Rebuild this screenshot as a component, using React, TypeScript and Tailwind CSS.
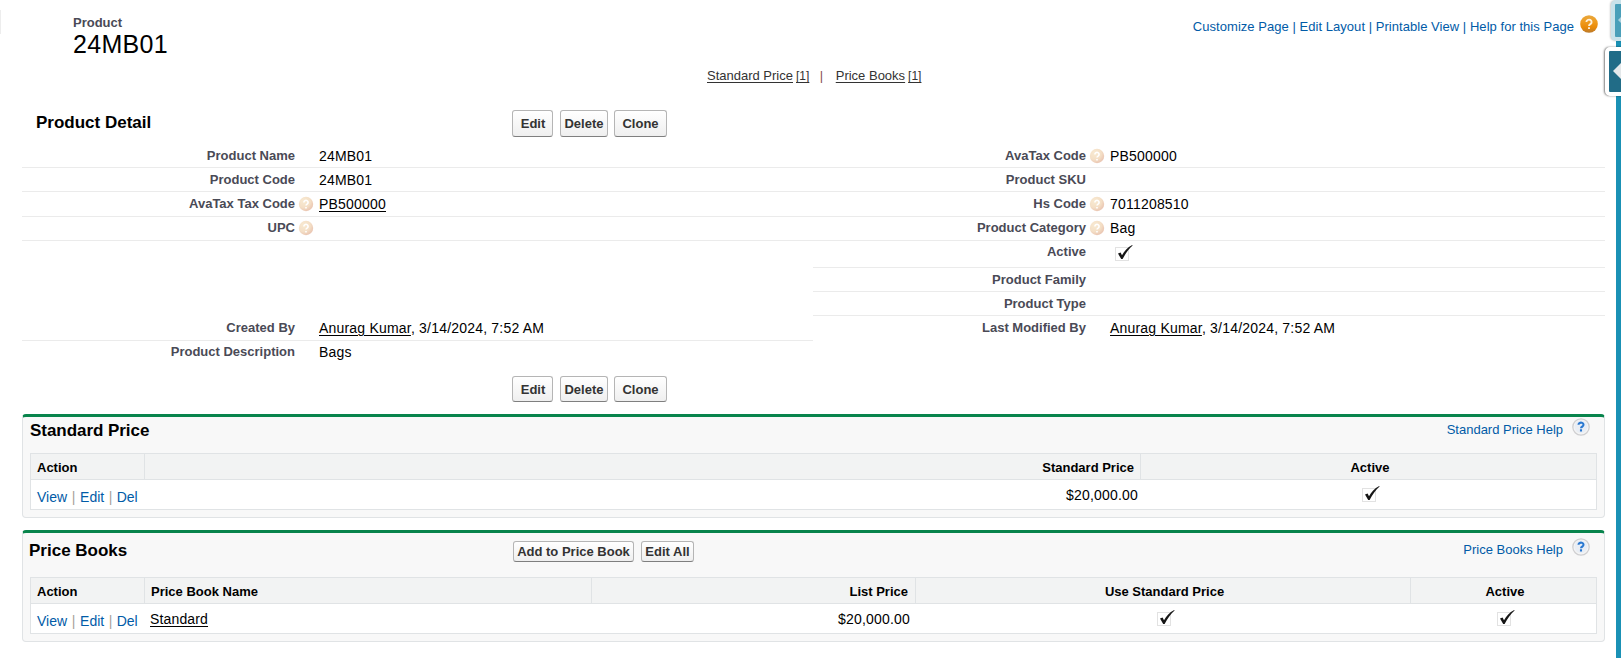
import type { ReactNode } from "react";

function HelpDot() {
  return (
    <svg viewBox="0 0 16 16" className="h-4 w-4">
      <defs>
        <radialGradient id="dot" cx="35%" cy="30%" r="75%">
          <stop offset="0" stopColor="#f8ead2" />
          <stop offset="0.6" stopColor="#f4dfc6" />
          <stop offset="1" stopColor="#e9c3b0" />
        </radialGradient>
      </defs>
      <circle cx="8" cy="8" r="7.2" fill="url(#dot)" />
      <path d="M5.9 6.4a2.1 2 0 1 1 3.2 1.7c-.8.5-1.1.8-1.1 1.5M8 10.9v1.5" fill="none" stroke="#fff" strokeWidth="1.6" />
    </svg>
  );
}

function PageHelpIcon() {
  return (
    <svg viewBox="0 0 18 18" className="h-[18px] w-[18px]">
      <defs>
        <linearGradient id="orange" x1="0" y1="0" x2="0" y2="1">
          <stop offset="0" stopColor="#e8a840" />
          <stop offset="0.4" stopColor="#ef9a1c" />
          <stop offset="0.7" stopColor="#e98a08" />
          <stop offset="1" stopColor="#b87a30" />
        </linearGradient>
      </defs>
      <circle cx="9" cy="9" r="8.8" fill="url(#orange)" />
      <path d="M6.4 7.1a2.6 2.4 0 1 1 4 2c-.9.6-1.4.9-1.4 1.8M9 12.2v1.9" fill="none" stroke="#fdf0dc" strokeWidth="1.9" />
    </svg>
  );
}

function ListHelpIcon() {
  return (
    <svg viewBox="0 0 18 18" className="h-[18px] w-[18px]">
      <circle cx="9" cy="9" r="8.2" fill="#f4f4f4" stroke="#cfcfd1" strokeWidth="1.3" />
      <circle cx="9" cy="8.6" r="6.4" fill="#e9eef5" />
      <path d="M6.5 6.7a2.5 2.1 0 1 1 3.9 1.8c-.9.5-1.4.8-1.4 1.7M9 11.3v2.1" fill="none" stroke="#2a78d0" strokeWidth="2.1" />
    </svg>
  );
}

function Check() {
  return (
    <svg viewBox="0 0 20 18" className="h-[18px] w-5">
      <rect x="1.5" y="3.5" width="13" height="13" fill="none" stroke="#c4c4c4" strokeDasharray="1 1" />
      <path d="M4 9.6 6.6 8.6 8 11.2C10.4 7 13.4 3.4 18.2 1L18.6 1.6C14.6 5 11.6 9.4 8.6 15H7.2Z" fill="#161616" />
    </svg>
  );
}

function Btn({ children, className }: { children: ReactNode; className: string }) {
  return (
    <button
      className={
        "shrink-0 rounded-[3px] border border-[#b5b5b5] border-b-[#7f7f7f] bg-linear-to-b from-white to-[#efefef] text-center text-[13px] font-bold whitespace-nowrap text-[#333] " +
        className
      }
    >
      {children}
    </button>
  );
}

function ActionButtons({ className }: { className: string }) {
  return (
    <div className="flex">
      <Btn className={"w-[41px] pl-px " + className}>Edit</Btn>
      <Btn className={"ml-[7px] w-12 " + className}>Delete</Btn>
      <Btn className={"ml-1.5 w-[53px] " + className}>Clone</Btn>
    </div>
  );
}

function Field({
  label,
  help,
  children,
  className = "h-6 border-b pt-1",
}: {
  label: string;
  help?: boolean;
  children?: ReactNode;
  className?: string;
}) {
  return (
    <div className={"flex border-[#ebebeb] " + className}>
      <div className="w-[273px] shrink-0 text-right text-[13px] leading-4 font-bold text-[#4a4a56]">{label}</div>
      <div className="w-6 shrink-0 pl-[2.5px]">{help && <HelpDot />}</div>
      <div className="text-[14px] leading-4 tracking-[0.2px] text-black">{children}</div>
    </div>
  );
}

function UserStamp() {
  return (
    <>
      <a className="underline underline-offset-2">Anurag Kumar</a>, 3/14/2024, 7:52 AM
    </>
  );
}

function RowActions() {
  return (
    <div className="flex pl-1.5 text-[14px] leading-4 text-[#015ba7]">
      <a>View</a>
      <span className="w-[13px] text-center text-[#a8a098]">|</span>
      <a>Edit</a>
      <span className="w-[12.5px] text-center text-[#a8a098]">|</span>
      <a>Del</a>
    </div>
  );
}

function Card({ children, className }: { children: ReactNode; className: string }) {
  return (
    <section className={"rounded-[4px] border border-t-[3px] border-[#e0e3e5] border-t-[#08844c] bg-[#f8f8f8] px-[7px] " + className}>
      {children}
    </section>
  );
}

const headCell = "border-r border-[#e0e3e5] px-1.5 pt-[6px]";

export default function App() {
  return (
    <div className="relative flex h-[658px] w-[1621px] overflow-hidden bg-white font-['Liberation_Sans',Arial,sans-serif]">
      <main className="w-[1616px] shrink-0 pl-[22px]">
        <header className="flex h-[66px] justify-between">
          <div className="pt-[15px] pl-[51px]">
            <div className="text-[13px] leading-4 font-bold text-[#4a4a56]">Product</div>
            <h1 className="text-[25px] leading-[26px] tracking-[0.3px] text-black">24MB01</h1>
          </div>
          <div className="flex pt-[15px] pr-[18px]">
            <div className="mr-1.5 pt-1 text-[13px] leading-4 tracking-[0.04px] whitespace-nowrap text-[#015ba7]">
              <a>Customize Page</a> | <a>Edit Layout</a> | <a>Printable View</a> | <a>Help for this Page</a>
            </div>
            <PageHelpIcon />
          </div>
        </header>

        <nav className="flex h-11 items-baseline pt-px pl-[685px] text-[13px] leading-[18px] text-[#333]">
          <a className="underline underline-offset-2">Standard Price</a>
          <a className="ml-[3px] text-[12px] underline underline-offset-2">[1]</a>
          <span className="mr-[12.5px] ml-[10.5px] text-[#8a5050]">|</span>
          <a className="underline underline-offset-2">Price Books</a>
          <a className="ml-[3px] text-[12px] underline underline-offset-2">[1]</a>
        </nav>

        <section>
          <div className="flex h-[34px]">
            <h2 className="w-[490px] shrink-0 pt-[3px] pl-[14px] text-[17px] leading-5 font-bold text-black">Product Detail</h2>
            <ActionButtons className="h-[27px]" />
          </div>
          <div className="flex h-[232px] w-[1583px]">
            <div className="w-[791px]">
              <Field label="Product Name">24MB01</Field>
              <Field label="Product Code">24MB01</Field>
              <Field label="AvaTax Tax Code" help className="h-[25px] border-b pt-1">
                <a className="underline underline-offset-2">PB500000</a>
              </Field>
              <Field label="UPC" help className="h-6 border-b pt-[3px]" />
              <div className="h-[75px]" />
              <Field label="Created By" className="h-[25px] border-b pt-1">
                <UserStamp />
              </Field>
              <Field label="Product Description" className="h-6 pt-[3px]">
                Bags
              </Field>
            </div>
            <div className="w-[792px]">
              <Field label="AvaTax Code" help>PB500000</Field>
              <Field label="Product SKU" />
              <Field label="Hs Code" help className="h-[25px] border-b pt-1">7011208510</Field>
              <Field label="Product Category" help className="h-6 border-b pt-[3px]">Bag</Field>
              <Field label="Active" className="h-[27px] border-b pt-[3px]">
                <div className="pl-1">
                  <Check />
                </div>
              </Field>
              <Field label="Product Family" />
              <Field label="Product Type" />
              <Field label="Last Modified By" className="h-[25px] pt-1">
                <UserStamp />
              </Field>
            </div>
          </div>
          <div className="h-[38px] pl-[490px]">
            <ActionButtons className="h-[26px] pt-px" />
          </div>
        </section>

        <div className="w-[1583px]">
          <Card className="h-[104px]">
            <div className="flex h-9 justify-between">
              <h3 className="pt-1 text-[17px] leading-5 font-bold tracking-[-0.05px] text-black">Standard Price</h3>
              <div className="flex pt-px pr-[7px]">
                <a className="mr-[9px] pt-1 text-[13px] leading-4 text-[#015ba7]">Standard Price Help</a>
                <ListHelpIcon />
              </div>
            </div>
            <div className="h-[57px] border border-[#e0e3e5] bg-white">
              <div className="flex h-[26px] border-b border-[#e0e3e5] bg-[#f2f3f3] text-[13px] leading-4 font-bold text-black">
                <div className={"w-[114px] " + headCell}>Action</div>
                <div className={"w-[996px] text-right " + headCell}>Standard Price</div>
                <div className="flex-1 pt-[6px] pl-[3px] text-center">Active</div>
              </div>
              <div className="flex text-[14px] leading-4 text-black">
                <div className="w-[114px] pt-[9px]">
                  <RowActions />
                </div>
                <div className="w-[996px] pt-[7px] pr-[3px] text-right tracking-[0.2px]">$20,000.00</div>
                <div className="flex flex-1 justify-center pt-[5px] pl-1">
                  <Check />
                </div>
              </div>
            </div>
          </Card>

          <Card className="mt-3 h-[112px]">
            <div className="flex h-11">
              <h3 className="-ml-px w-[484px] shrink-0 pt-2 text-[17px] leading-5 font-bold text-black">Price Books</h3>
              <div className="flex pt-2">
                <Btn className="h-[21px] w-[121px]">Add to Price Book</Btn>
                <Btn className="ml-[7px] h-[21px] w-[53px]">Edit All</Btn>
              </div>
              <div className="ml-auto flex pt-[5px] pr-[7px]">
                <a className="mr-[9px] pt-1 text-[13px] leading-4 text-[#015ba7]">Price Books Help</a>
                <ListHelpIcon />
              </div>
            </div>
            <div className="h-[57px] border border-[#e0e3e5] bg-white">
              <div className="flex h-[26px] border-b border-[#e0e3e5] bg-[#f2f3f3] text-[13px] leading-4 font-bold text-black">
                <div className={"w-[114px] " + headCell}>Action</div>
                <div className={"w-[447px] " + headCell}>Price Book Name</div>
                <div className="w-[324px] border-r border-[#e0e3e5] pt-[6px] pr-[7px] text-right">List Price</div>
                <div className="w-[495px] border-r border-[#e0e3e5] pt-[6px] pl-[3px] text-center">Use Standard Price</div>
                <div className="flex-1 pt-[6px] pl-[3px] text-center">Active</div>
              </div>
              <div className="flex text-[14px] leading-4 text-black">
                <div className="w-[114px] pt-[9px]">
                  <RowActions />
                </div>
                <div className="w-[447px] pt-[7px] pl-[5px] tracking-[0.15px]">
                  <a className="underline underline-offset-2">Standard</a>
                </div>
                <div className="w-[324px] pt-[7px] pr-[6px] text-right tracking-[0.2px]">$20,000.00</div>
                <div className="flex w-[495px] justify-center pt-[5px] pl-1">
                  <Check />
                </div>
                <div className="flex flex-1 justify-center pt-[5px] pl-1">
                  <Check />
                </div>
              </div>
            </div>
          </Card>
        </div>
      </main>

      <aside className="w-[5px] shrink-0 bg-[#1a91b5]" />
      <div className="absolute top-0 left-[1611px] h-[41px] w-4 rounded-[5px] border-4 border-white/70 bg-[#4a9fb9] shadow-[-1px_0_2px_rgba(0,0,0,0.2)]">
        <svg viewBox="0 0 8 14" className="mt-[9px] ml-[2px] h-3.5 w-2">
          <path d="M7 1v12L1 7Z" fill="#a9d0de" />
        </svg>
      </div>
      <div className="absolute top-[47px] left-[1605px] h-[49px] w-6 rounded-[5px] border-4 border-white bg-[#216c87] shadow-[-1px_0_2px_rgba(0,0,0,0.5)]">
        <svg viewBox="0 0 8 16" className="mt-[12px] ml-[4px] h-4 w-2">
          <path d="M8 0v16L0 8Z" fill="#e4e8ea" />
        </svg>
      </div>
      <div className="absolute top-2.5 left-0 h-6 w-px bg-[#ededed]" />
    </div>
  );
}
